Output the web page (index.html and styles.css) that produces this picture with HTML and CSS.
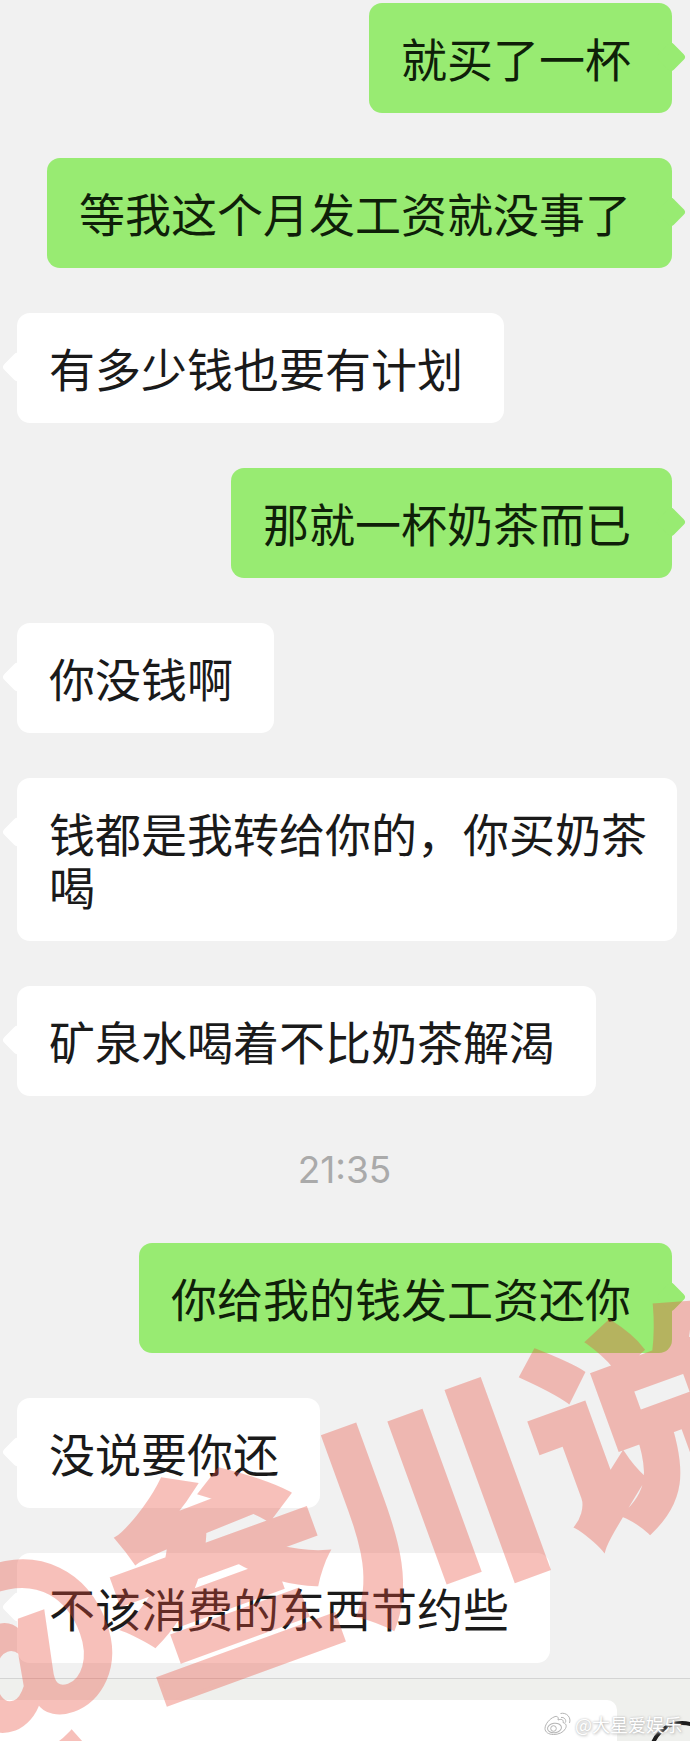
FILE: index.html
```
<!DOCTYPE html>
<html lang="zh-CN">
<head>
  <meta charset="utf-8">
  <meta name="viewport" content="width=device-width, initial-scale=1">
  <title>聊天记录</title>
  <link rel="stylesheet" href="styles.css">
</head>
<body>
  <div class="page">
    <main class="chat">
      <div class="message sent">就买了一杯</div>
      <div class="message sent">等我这个月发工资就没事了</div>
      <div class="message received">有多少钱也要有计划</div>
      <div class="message sent">那就一杯奶茶而已</div>
      <div class="message received">你没钱啊</div>
      <div class="message received long">钱都是我转给你的，你买奶茶喝</div>
      <div class="message received">矿泉水喝着不比奶茶解渴</div>
      <time class="time">21:35</time>
      <div class="message sent">你给我的钱发工资还你</div>
      <div class="message received">没说要你还</div>
      <div class="message received">不该消费的东西节约些</div>
    </main>

    <footer class="input-bar">
      <input class="input-box" type="text" aria-label="输入消息">
      <button class="emoji-button" type="button" aria-label="表情">
        <svg width="66" height="66" viewBox="0 0 66 66" fill="none" stroke="#1c1c1c" stroke-width="4">
          <circle cx="33" cy="33" r="31"/>
          <path d="M19 38a14 14 0 0 0 28 0z"/>
        </svg>
      </button>
    </footer>

    <div class="watermark">@叁川说</div>

    <div class="source">
      <svg width="28" height="24" viewBox="0 0 28 24" fill="none" stroke="#b4b4b4" stroke-width="1">
        <path fill="#fff" d="M10 5c3-1.500 5 0 4 3 3-1.300 6-.5 5 2.500 3 1 4 3 2.500 6C19.500 20.500 14.500 22.500 9.500 22.500 4.500 22.500 1 20 1 16.500 1 12 6 6.500 10 5z"/>
        <ellipse cx="10.500" cy="16" rx="7" ry="4.800" transform="rotate(-8 10.500 16)"/>
        <circle cx="9.500" cy="16.500" r="2.800"/>
        <path d="M17 5.500c3-.5 5.500 2 4.500 5M16.500 1.500c6-1.500 11 4 9 9.500"/>
      </svg>
      <span>@大星爱娱乐</span>
    </div>
  </div>
</body>
</html>
```
FILE: styles.css
```
* {
  box-sizing: border-box;
}

body {
  margin: 0;
  background: #f1f1f1;
  color: #1a1a1a;
  font-family: "Noto Sans CJK SC", sans-serif;
}

.page {
  position: relative;
  display: flex;
  flex-direction: column;
  min-height: 100vh;
  overflow: hidden;
}

.chat {
  display: flex;
  flex-direction: column;
  align-items: flex-start;
  gap: 45px;
  padding: 3px 18px 15px 17px;
}

.message {
  position: relative;
  max-width: 660px;
  padding: 28px 41px 29px 32px;
  border-radius: 13px;
  font-size: 46px;
  line-height: 53px;
}

/* little arrow on the side of the bubble */
.message::after {
  content: "";
  position: absolute;
  top: 43px;
  width: 22px;
  height: 22px;
  border-radius: 4px;
  background: inherit;
  transform: rotate(45deg);
}

.sent {
  align-self: flex-end;
  background: #98eb72;
  color: #0f1f09;
}

.sent::after {
  right: -10px;
}

.received {
  background: #fff;
}

.received::after {
  left: -11px;
}

.long {
  margin-right: -5px;
  padding-right: 29px;
}

.time {
  align-self: center;
  color: #aaa;
  font-family: Inter, sans-serif;
  font-size: 37px;
  line-height: 57px;
}

.input-bar {
  display: flex;
  flex: 1 0 63px;
  gap: 32px;
  min-height: 0;
  padding-top: 21px;
  overflow: hidden;
  border-top: 1px solid #d4d4d4;
  background: #eff0ed;
}

.input-box {
  flex: 1;
  min-width: 0;
  height: 80px;
  padding: 0 20px;
  border: 0;
  border-radius: 0 10px 10px 0;
  background: #fff;
  font-size: 36px;
}

.emoji-button {
  flex: none;
  width: 66px;
  height: 66px;
  margin: 21px -25px 0 0;
  padding: 0;
  border: 0;
  background: none;
}

.emoji-button svg {
  display: block;
}

.watermark {
  position: absolute;
  bottom: -47px;
  left: -70px;
  color: #eb4e3d;
  font-size: 224px;
  font-weight: 900;
  line-height: 224px;
  white-space: nowrap;
  opacity: 0.35;
  -webkit-text-stroke: 4px #eb4e3d;
  transform: rotate(-20deg);
  transform-origin: left bottom;
  pointer-events: none;
}

.source {
  position: absolute;
  right: 8px;
  bottom: 3px;
  display: flex;
  align-items: center;
  gap: 3px;
  color: #fff;
  font-size: 18px;
  line-height: 28px;
  text-shadow: 0 0 2px #bbb, 1px 1px 3px #bbb;
}
```
